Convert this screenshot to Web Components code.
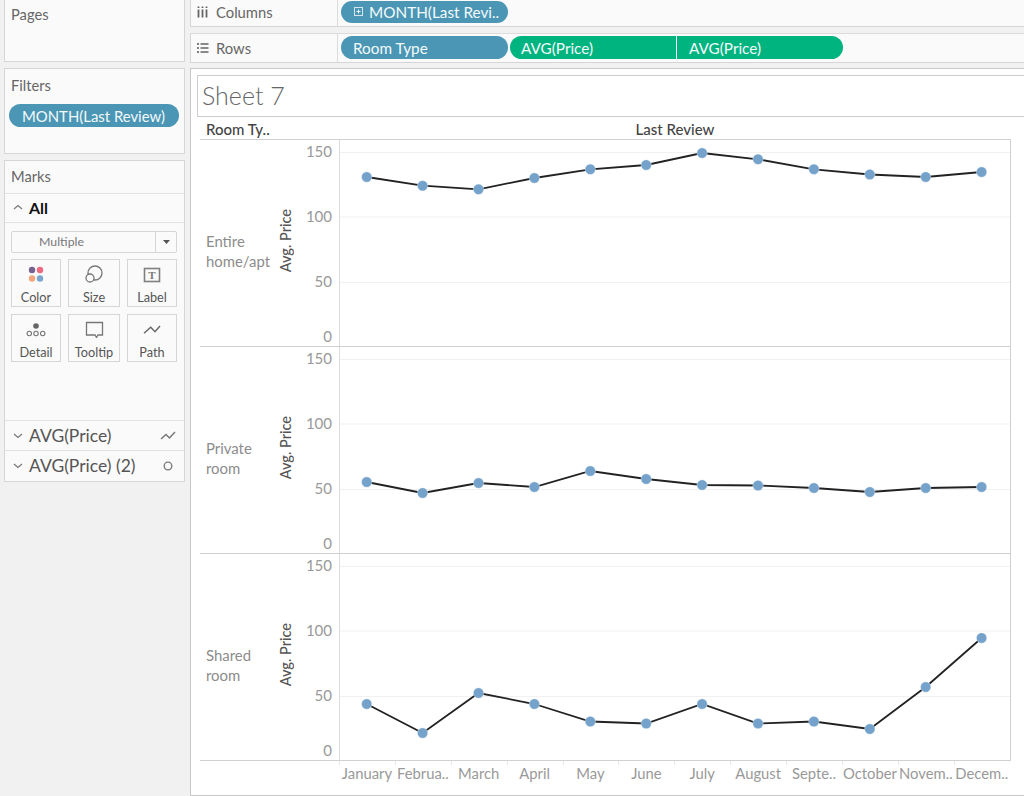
<!DOCTYPE html>
<html>
<head>
<meta charset="utf-8">
<style>
  html, body { margin: 0; height: 796px; overflow: hidden; }
  body { background: #f1f1f1; font-family: Lato, "Open Sans", sans-serif; }
  #app { display: flex; gap: 5px; padding-left: 4px; height: 796px; }
  #left { width: 181px; flex: none; display: flex; flex-direction: column; gap: 6px; }
  #right { flex: 1; min-width: 0; display: flex; flex-direction: column; }
</style>
</head>
<body>
<div id="app">
  <div id="left">
    <side-card label="Pages" notop style="height:62px"></side-card>
    <side-card label="Filters" style="height:86px">
      <data-pill style="margin:0 4px;width:170px;font-size:14.900px;padding-left:13px">MONTH(Last Review)</data-pill>
    </side-card>
    <marks-card></marks-card>
  </div>
  <div id="right">
    <shelf-row label="Columns" icon="columns" style="height:27px" notop>
      <data-pill style="width:167px;height:22px" plus>MONTH(Last Revi..</data-pill>
    </shelf-row>
    <shelf-row label="Rows" icon="rows" style="height:30px;margin-top:6px">
      <data-pill style="width:167px">Room Type</data-pill>
      <data-pill style="width:166px;margin-left:2px;padding-left:11px" tone="green" join="right">AVG(Price)</data-pill>
      <data-pill style="width:166px;margin-left:1px" tone="green" join="left">AVG(Price)</data-pill>
    </shelf-row>
    <sheet-view title="Sheet 7"></sheet-view>
  </div>
</div>

<script>
class SideCard extends HTMLElement {
  constructor() {
    super()
    const noTop = this.hasAttribute('notop')
    this.attachShadow({mode: 'open'}).innerHTML = `
      <style>
        :host { display: block; box-sizing: border-box; background: #fafafa; border: 1px solid #d6d6d6; border-top: ${noTop ? 'none' : '1px solid #d6d6d6'}; }
        .label { font-size: 14.700px; color: #666; padding: ${noTop ? 6 : 8}px 0 10px 6px; line-height: 17px; }
      </style>
      <div class="label">${this.getAttribute('label')}</div>
      <slot></slot>
    `
  }
}
customElements.define('side-card', SideCard)

class DataPill extends HTMLElement {
  constructor() {
    super()
    const green = this.getAttribute('tone') === 'green'
    const join = this.getAttribute('join')
    const radius = join === 'right' ? '12px 0 0 12px' : join === 'left' ? '0 12px 12px 0' : '12px'
    const plus = this.hasAttribute('plus') ? `<svg width="11" height="11" viewBox="0 0 11 11"><rect x="1.5" y="1.5" width="8" height="8" fill="none" stroke="#d5e6ee"/><path d="M3.5 5.5h4M5.5 3.5v4" stroke="#e8f2f6"/></svg>` : ''
    this.attachShadow({mode: 'open'}).innerHTML = `
      <style>
        :host { display: flex; flex: none; box-sizing: border-box; height: 23px; align-items: center; gap: 5px;
          padding-left: 12px; border-radius: ${radius};
          background: ${green ? '#00b480' : '#4b96b4'}; color: #f4fafb; font-size: 15.300px; white-space: nowrap; }
        svg { flex: none; }
      </style>
      ${plus}<slot></slot>
    `
  }
}
customElements.define('data-pill', DataPill)

const SHELF_ICONS = {
  columns: '<path d="M1.500 1.500v1.500M1.500 4.500v8M5.500 1.500v1.500M5.500 4.500v8M9.500 1.500v1.500M9.500 4.500v8" stroke="#666" stroke-width="1.800"/>',
  rows: '<path d="M0 3h2M0 7h2M0 11h2" stroke="#555" stroke-width="1.500"/><path d="M3.500 3h8M3.500 7h8M3.500 11h8" stroke="#666" stroke-width="1.500"/>'
}

class ShelfRow extends HTMLElement {
  constructor() {
    super()
    const icon = SHELF_ICONS[this.getAttribute('icon')]
    const noTop = this.hasAttribute('notop')
    this.attachShadow({mode: 'open'}).innerHTML = `
      <style>
        :host { display: flex; flex: none; box-sizing: border-box; background: #fafafa; border-bottom: 1px solid #d6d6d6; border-top: ${noTop ? 'none' : '1px solid #dcdcdc'}; border-left: 1px solid #d6d6d6; }
        .head { width: 147px; flex: none; box-sizing: border-box; display: flex; align-items: center; gap: 6px; padding: 0 0 ${noTop ? 3 : 1}px 6px;
          border-right: 1px solid #dcdcdc; font-size: 14.800px; color: #666; }
        .pills { display: flex; align-items: center; padding: 0 0 ${noTop ? 3 : 1}px 3px; }
      </style>
      <div class="head"><svg width="13" height="14" viewBox="0 0 13 14">${icon}</svg><span>${this.getAttribute('label')}</span></div>
      <div class="pills"><slot></slot></div>
    `
  }
}
customElements.define('shelf-row', ShelfRow)

const MARK_ICONS = {
  Color: '<circle cx="10" cy="6" r="3.200" fill="#76618f"/><circle cx="18" cy="6" r="3.200" fill="#ef6a80"/><circle cx="10" cy="14.500" r="3.200" fill="#f4a77c"/><circle cx="18" cy="14.500" r="3.200" fill="#78a6cd"/>',
  Size: '<circle cx="15" cy="9" r="7" fill="none" stroke="#777" stroke-width="1.300"/><circle cx="10" cy="14" r="4" fill="#fafafa" stroke="#777" stroke-width="1.300"/>',
  Label: '<rect x="6.500" y="4.500" width="15" height="13" fill="none" stroke="#808080" stroke-width="1.600"/><text x="14" y="15" text-anchor="middle" font-family="Liberation Serif, serif" font-weight="700" font-size="11" fill="#777">T</text>',
  Detail: '<circle cx="14" cy="7" r="2.800" fill="#666"/><circle cx="7.300" cy="14.500" r="2.200" fill="none" stroke="#777" stroke-width="1.100"/><circle cx="14" cy="14.500" r="2.200" fill="none" stroke="#777" stroke-width="1.100"/><circle cx="20.700" cy="14.500" r="2.200" fill="none" stroke="#777" stroke-width="1.100"/>',
  Tooltip: '<path d="M6.500 3.500h16v12.500h-4.500l-1.500 2.500-1.500-2.500H6.500z" fill="none" stroke="#777" stroke-width="1.300"/>',
  Path: '<path d="M6 14.300l6.700-6 4.300 4.400 5-5.700" fill="none" stroke="#666" stroke-width="1.400"/>'
}

class MarkButton extends HTMLElement {
  constructor() {
    super()
    const name = this.getAttribute('name')
    this.attachShadow({mode: 'open'}).innerHTML = `
      <style>
        :host { display: flex; flex-direction: column; align-items: center; box-sizing: border-box; height: 48px; padding-top: 4px;
          background: #fafafa; border: 1px solid #d6d6d6; font-size: 12.700px; color: #555; }
        span { margin-top: 6px; line-height: 16px; }
      </style>
      <svg width="28" height="19" viewBox="0 0 28 19">${MARK_ICONS[name]}</svg>
      <span>${name}</span>
    `
  }
}
customElements.define('mark-button', MarkButton)

class MarksField extends HTMLElement {
  constructor() {
    super()
    const icon = this.getAttribute('kind') === 'line'
      ? '<path d="M1 10l5-4.500 3.500 3.500 5.500-6" fill="none" stroke="#777" stroke-width="1.500"/>'
      : '<circle cx="8" cy="7" r="3.800" fill="none" stroke="#777" stroke-width="1.300"/>'
    this.attachShadow({mode: 'open'}).innerHTML = `
      <style>
        :host { display: flex; align-items: center; box-sizing: border-box; height: 30px; border-top: 1px solid #e2e2e2; padding-left: 8px; font-size: 17.500px; color: #555; }
        span { flex: 1; margin-left: 6px; white-space: nowrap; }
        svg.end { margin-right: 7px; }
      </style>
      <svg width="10" height="6" viewBox="0 0 10 6"><path d="M1 1l4 3.500L9 1" fill="none" stroke="#777" stroke-width="1.200"/></svg>
      <span><slot></slot></span>
      <svg class="end" width="17" height="14" viewBox="0 0 17 14">${icon}</svg>
    `
  }
}
customElements.define('marks-field', MarksField)

class MarksCard extends HTMLElement {
  constructor() {
    super()
    this.attachShadow({mode: 'open'}).innerHTML = `
      <style>
        :host { display: block; box-sizing: border-box; height: 322px; background: #fafafa; border: 1px solid #d6d6d6; }
        .title { height: 32px; box-sizing: border-box; padding: 7px 0 0 6px; line-height: 17px; font-size: 14.700px; color: #666; }
        .all { display: flex; align-items: center; height: 30px; box-sizing: border-box; border-top: 1px solid #e2e2e2; border-bottom: 1px solid #e2e2e2;
          padding: 0 0 2px 8px; gap: 6px; font-size: 16px; font-weight: 700; color: #111; }
        .drop { display: flex; margin: 8px 7px 0 6px; height: 22px; box-sizing: border-box; background: #fafafa; border: 1px solid #d6d6d6; border-radius: 2px; font-size: 12.300px; color: #777; }
        .drop span { flex: 1; text-align: center; padding-right: 44px; line-height: 20px; }
        .drop i { width: 20px; border-left: 1px solid #d6d6d6; display: flex; align-items: center; justify-content: center; }
        .grid { display: grid; grid-template-columns: 50px 52px 50px; column-gap: 7px; row-gap: 7px; margin: 6px 7px 0 6px; height: 161px; align-content: start; }
      </style>
      <div class="title">Marks</div>
      <div class="all"><svg width="10" height="6" viewBox="0 0 10 6"><path d="M1 5l4-3.500L9 5" fill="none" stroke="#777" stroke-width="1.200"/></svg>All</div>
      <div class="drop"><span>Multiple</span><i><svg width="7" height="4" viewBox="0 0 7 4"><path d="M0 0h7L3.500 4z" fill="#555"/></svg></i></div>
      <div class="grid">
        <mark-button name="Color"></mark-button>
        <mark-button name="Size"></mark-button>
        <mark-button name="Label"></mark-button>
        <mark-button name="Detail"></mark-button>
        <mark-button name="Tooltip"></mark-button>
        <mark-button name="Path"></mark-button>
      </div>
      <marks-field kind="line">AVG(Price)</marks-field>
      <marks-field kind="dot">AVG(Price) (2)</marks-field>
    `
  }
}
customElements.define('marks-card', MarksCard)

// plot svg starts at x=296 of the page, vertical axis sits at 339
const AXIS_X = 43.5
const STEP = 55.9

class RoomPanel extends HTMLElement {
  constructor() {
    super()
    const top = Number(this.getAttribute('top'))
    const ys = this.getAttribute('ys').split(' ').map(y => Number(y) - top)
    const scale = [[150, 12], [100, 76.500], [50, 142]]
    const grid = scale.map(([v, y]) => `
      <line x1="${AXIS_X}" x2="714" y1="${y + .5}" y2="${y + .5}" stroke="#f1f1f1"/>
      <text x="36" y="${y + 5}">${v}</text>`).join('')
    const pts = ys.map((y, i) => [AXIS_X + 27.2 + i * STEP, y])
    const dots = pts.map(([x, y]) => `<circle cx="${x}" cy="${y}" r="5.200" fill="#74a2cb" stroke="#fff" stroke-opacity=".35"/>`).join('')
    this.attachShadow({mode: 'open'}).innerHTML = `
      <style>
        :host { display: flex; box-sizing: border-box; height: 207px; width: 811px; border-bottom: 1px solid #d0d0d0; border-right: 1px solid #d0d0d0; }
        .room { width: 74px; flex: none; box-sizing: border-box; padding-left: 6px; align-self: center; font-size: 14.900px; line-height: 20px; color: #8c8c8c; margin-top: 16px; }
        .axis { width: 22px; flex: none; display: flex; align-items: center; justify-content: center; padding-bottom: 4px; }
        .axis span { writing-mode: vertical-rl; transform: rotate(180deg); font-size: 14.500px; font-weight: 500; color: #555; white-space: nowrap; position: relative; left: 0; }
        svg { flex: none; display: block; }
        text { font-family: Lato, "Open Sans", sans-serif; font-size: 15px; fill: #999; text-anchor: end; }
      </style>
      <div class="room"><slot></slot></div>
      <div class="axis"><span>Avg. Price</span></div>
      <svg width="714" height="206" viewBox="0 0 714 206">
        ${grid}
        <text x="36" y="201.500">0</text>
        <line x1="${AXIS_X}" x2="${AXIS_X}" y1="0" y2="206" stroke="#dcdcdc"/>
        <polyline points="${pts.map(p => p.join(',')).join(' ')}" fill="none" stroke="#222" stroke-width="1.800"/>
        ${dots}
      </svg>
    `
  }
}
customElements.define('room-panel', RoomPanel)

class MonthAxis extends HTMLElement {
  constructor() {
    super()
    const months = ['January', 'Februa..', 'March', 'April', 'May', 'June', 'July', 'August', 'Septe..', 'October', 'Novem..', 'Decem..']
    this.attachShadow({mode: 'open'}).innerHTML = `
      <style>
        :host { display: grid; grid-template-columns: repeat(12, 55.900px); padding-left: 139px; height: 26px; }
        div { text-align: center; font-size: 14.800px; color: #999; line-height: 24px; white-space: nowrap; height: 26px; background: linear-gradient(#e8e8e8, #e8e8e8) left top / 1px 4px no-repeat; }
        div span { display: block; margin: 0 -10px; }
      </style>
      ${months.map(m => `<div><span>${m}</span></div>`).join('')}
    `
  }
}
customElements.define('month-axis', MonthAxis)

class SheetView extends HTMLElement {
  constructor() {
    super()
    this.attachShadow({mode: 'open'}).innerHTML = `
      <style>
        :host { display: block; box-sizing: border-box; height: 728px; margin-top: 5px; background: #fff; border: 1px solid #c8c8c8; border-right: none; padding: 6px 0 0 6px; overflow: hidden; }
        .title { box-sizing: border-box; height: 42px; width: 900px; border: 1px solid #ccc; font-size: 25px; font-weight: 300; color: #666; padding-left: 4px; line-height: 39px; }
        .head { display: flex; height: 22px; margin-left: 3px; width: 811px; border-bottom: 1px solid #d0d0d0; font-size: 15px; line-height: 24px; color: #444; }
        .head b { width: 139px; flex: none; padding-left: 6px; box-sizing: border-box; font-weight: 500; }
        .head span { flex: 1; text-align: center; font-weight: 500; }
        .panels { margin-left: 3px; }
      </style>
      <div class="title">${this.getAttribute('title')}</div>
      <div class="head"><b>Room Ty..</b><span>Last Review</span></div>
      <div class="panels">
        <room-panel top="140" ys="177 185.700 189.300 178 169.300 165 153 159.300 169.300 174.500 177 172">Entire<br>home/apt</room-panel>
        <room-panel top="347" ys="482 493 483 487 471 479 485 485.500 488 492 488 487">Private<br>room</room-panel>
        <room-panel top="554" ys="704 733 693 704 721.500 723.500 704 723.500 721.500 729 687 638">Shared<br>room</room-panel>
        <month-axis></month-axis>
      </div>
    `
  }
}
customElements.define('sheet-view', SheetView)
</script>
</body>
</html>
